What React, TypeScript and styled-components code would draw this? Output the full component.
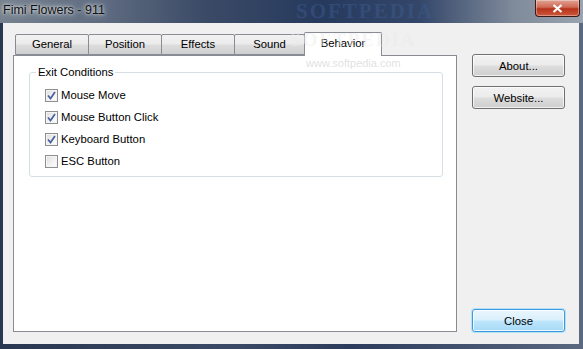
import React from "react";
import styled, { createGlobalStyle } from "styled-components";

const GlobalStyle = createGlobalStyle`
  html, body {
    margin: 0;
    padding: 0;
    background: #ffffff;
  }
  body {
    font-family: "Liberation Sans", Arial, sans-serif;
    font-size: 11.3px;
    color: #000;
  }
`;

const SWindow = styled.div`
  position: relative;
  width: 583px;
  height: 349px;
  display: flex;
  flex-direction: column;
  overflow: hidden;
  background: linear-gradient(90deg, #2a3750 0%, #3b4a66 40%, #2c3c5c 60%, #5b6880 100%);
`;

const STitleBar = styled.div`
  height: 23px;
  display: flex;
  align-items: flex-start;
  justify-content: space-between;
  background: linear-gradient(
    90deg,
    #76828f 0%,
    #5e6b80 18%,
    #3b4a66 35%,
    #263a5e 55%,
    #34476a 72%,
    #7f8a9a 88%,
    #9aa3b0 100%
  );
`;

const STitle = styled.div`
  padding: 3px 0 0 3px;
  font-size: 12.5px;
  color: #111;
  text-shadow: 0 0 6px rgba(255, 255, 255, 0.9), 0 0 3px rgba(255, 255, 255, 0.8);
`;

const SCaptionClose = styled.div`
  width: 45px;
  height: 17px;
  margin-right: 3px;
  display: grid;
  place-items: center;
  box-sizing: border-box;
  border: 1px solid #3b1a18;
  border-top: none;
  border-radius: 0 0 4px 4px;
  background: linear-gradient(180deg, #e0a394 0%, #cf6a55 45%, #b7321c 55%, #cd5a3c 100%);
  box-shadow: inset 0 0 0 1px rgba(255, 255, 255, 0.35);
`;

const SClient = styled.div`
  flex: 1;
  margin: 0 4px 5px 3px;
  background: #f0f0f0;
  display: flex;
  padding: 9px 0 12px 10px;
  box-sizing: border-box;
`;

const STabArea = styled.div`
  width: 444px;
  display: flex;
  flex-direction: column;
`;

const STabStrip = styled.div`
  height: 23px;
  display: flex;
  align-items: flex-end;
  padding-left: 2px;
`;

const STab = styled.div<{ $w: number; $active?: boolean }>`
  width: ${(p) => p.$w}px;
  height: ${(p) => (p.$active ? 24 : 21)}px;
  box-sizing: border-box;
  margin-right: -1px;
  margin-bottom: ${(p) => (p.$active ? -1 : 0)}px;
  position: relative;
  z-index: ${(p) => (p.$active ? 2 : 1)};
  border: 1px solid #898c95;
  border-bottom: ${(p) => (p.$active ? "none" : "1px solid #898c95")};
  border-radius: 2px 2px 0 0;
  background: ${(p) =>
    p.$active
      ? "#ffffff"
      : "linear-gradient(180deg, #f2f2f2 0%, #ebebeb 48%, #dddddd 52%, #cfcfcf 100%)"};
  display: flex;
  justify-content: center;
  padding-top: ${(p) => (p.$active ? 4 : 3)}px;
`;

const SPanel = styled.div`
  flex: 1;
  border: 1px solid #898c95;
  background: #ffffff;
  box-sizing: border-box;
  padding: 16px 13px 0 15px;
`;

const SGroupBox = styled.div`
  height: 105px;
  box-sizing: border-box;
  border: 1px solid #d5dfe5;
  border-radius: 3px;
  display: flex;
  flex-direction: column;
  padding: 0 0 0 15px;
`;

const SGroupCaption = styled.div`
  align-self: flex-start;
  margin: -8px 0 0 -9px;
  padding: 0 2px;
  background: #ffffff;
  line-height: 15px;
`;

const SCheckList = styled.div`
  display: flex;
  flex-direction: column;
  margin-top: 4px;
`;

const SCheckRow = styled.label`
  height: 22px;
  display: flex;
  align-items: center;
`;

const SCheckBox = styled.span`
  width: 13px;
  height: 13px;
  box-sizing: border-box;
  border: 1px solid #8e8f8f;
  margin-right: 3px;
  display: grid;
  place-items: center;
  background: linear-gradient(135deg, #dcdcdc 0%, #f4f4f4 60%, #ffffff 100%);
  box-shadow: inset 0 0 0 1px #f4f4f4;
`;

const SRightColumn = styled.div`
  width: 93px;
  margin-left: 15px;
  padding-top: 22px;
  display: flex;
  flex-direction: column;
  gap: 9px;
`;

const SButton = styled.div<{ $default?: boolean }>`
  height: 23px;
  box-sizing: border-box;
  border: 1px solid ${(p) => (p.$default ? "#3c9ae0" : "#707070")};
  border-radius: 3px;
  display: grid;
  place-items: center;
  background: ${(p) =>
    p.$default
      ? "linear-gradient(180deg, #eaf6fd 0%, #d9f0fc 48%, #bee6fd 52%, #a7d9f5 100%)"
      : "linear-gradient(180deg, #f2f2f2 0%, #ebebeb 48%, #dddddd 52%, #cfcfcf 100%)"};
  box-shadow: ${(p) =>
    p.$default
      ? "inset 0 0 0 1px rgba(255,255,255,0.8), 0 0 0 1px rgba(68, 200, 255, 0.35)"
      : "inset 0 0 0 1px rgba(255,255,255,0.7)"};
  margin-top: ${(p) => (p.$default ? "auto" : "0")};
`;

const SWatermark = styled.div<{ $top: number; $left: number; $size: number; $color: string }>`
  position: absolute;
  top: ${(p) => p.$top}px;
  left: ${(p) => p.$left}px;
  font-family: "Liberation Serif", "Times New Roman", serif;
  font-weight: bold;
  font-size: ${(p) => p.$size}px;
  line-height: 1;
  letter-spacing: 2px;
  color: ${(p) => p.$color};
  pointer-events: none;
  z-index: 5;
  white-space: nowrap;
`;

const SWatermarkUrl = styled.div`
  position: absolute;
  top: 57px;
  left: 306px;
  font-size: 11px;
  color: rgba(200, 200, 200, 0.55);
  pointer-events: none;
  z-index: 5;
`;

const Check: React.FC<{ checked: boolean }> = ({ checked }) => (
  <SCheckBox>
    {checked && (
      <svg width="9" height="9" viewBox="0 0 9 9">
        <path d="M1 4.5 L3.5 7.5 L8 1" fill="none" stroke="#4a5f9c" strokeWidth="1.7" />
      </svg>
    )}
  </SCheckBox>
);

const tabs = [
  { label: "General", w: 74 },
  { label: "Position", w: 74 },
  { label: "Effects", w: 74 },
  { label: "Sound", w: 71 },
  { label: "Behavior", w: 78, active: true },
];

const conditions = [
  { label: "Mouse Move", checked: true },
  { label: "Mouse Button Click", checked: true },
  { label: "Keyboard Button", checked: true },
  { label: "ESC Button", checked: false },
];

const App = () => {
  return (
    <>
      <GlobalStyle />
      <SWindow>
        <STitleBar>
          <STitle>Fimi Flowers - 911</STitle>
          <SCaptionClose>
            <svg width="11" height="9" viewBox="0 0 11 9">
              <path d="M1.5 1 L9.5 8 M9.5 1 L1.5 8" stroke="#ffffff" strokeWidth="2.2" />
            </svg>
          </SCaptionClose>
        </STitleBar>
        <SClient>
          <STabArea>
            <STabStrip>
              {tabs.map((t) => (
                <STab key={t.label} $w={t.w} $active={t.active}>
                  {t.label}
                </STab>
              ))}
            </STabStrip>
            <SPanel>
              <SGroupBox>
                <SGroupCaption>Exit Conditions</SGroupCaption>
                <SCheckList>
                  {conditions.map((c) => (
                    <SCheckRow key={c.label}>
                      <Check checked={c.checked} />
                      {c.label}
                    </SCheckRow>
                  ))}
                </SCheckList>
              </SGroupBox>
            </SPanel>
          </STabArea>
          <SRightColumn>
            <SButton>About...</SButton>
            <SButton>Website...</SButton>
            <SButton $default>Close</SButton>
          </SRightColumn>
        </SClient>
        <SWatermark $top={1} $left={296} $size={21} $color="rgba(60, 90, 140, 0.5)">
          SOFTPEDIA
        </SWatermark>
        <SWatermark $top={30} $left={290} $size={19} $color="rgba(235, 235, 235, 0.5)">
          SOFTPEDIA
        </SWatermark>
        <SWatermarkUrl>www.softpedia.com</SWatermarkUrl>
      </SWindow>
    </>
  );
};

export default App;
